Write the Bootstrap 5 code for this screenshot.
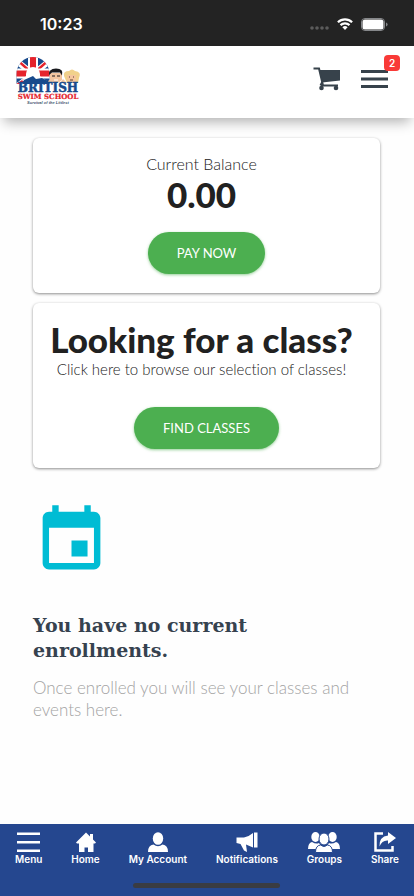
<!DOCTYPE html>
<html lang="en">
<head>
<meta charset="utf-8">
<meta name="viewport" content="width=device-width, initial-scale=1">
<title>British Swim School</title>
<link href="https://cdn.jsdelivr.net/npm/bootstrap@5.3.0/dist/css/bootstrap.min.css" rel="stylesheet">
<style>
  body { font-family: Lato, sans-serif; color: #212121; background: #fefefe; }
  svg { display: block; flex: none; }
  .status { background: #232323; height: 46px; padding: 2px 26px 0 40px; font: 600 16px/20px Inter, sans-serif; }
  .topbar { height: 72px; padding: 0 26px 6px 14px; box-shadow: 0 8px 12px -4px rgba(0,0,0,.3); }
  .brand { padding-top: 4px; }
  .icon-btn { background: none; border: 0; padding: 0; color: #37424b; }
  .cart { margin-right: 20px; }
  .count { position: absolute; top: -14px; right: -12px; width: 16px; height: 16px; border-radius: 4px; background: #f93a37; color: #fff; font: 600 10px/16px Inter, sans-serif; text-align: center; }
  .content { padding: 20px 34px 20px 33px; }
  .panel { border: 0; border-radius: 6px; padding: 16px 16px 19px; box-shadow: 0 1px 3px rgba(0,0,0,.45); }
  .panel + .panel { margin-top: 10px; }
  .panel-text { padding-right: 10px; margin-bottom: 18px; }
  .panel-note { font-size: 15px; line-height: 20px; font-weight: 300; margin: 0 0 10px; font-variant-ligatures: none; }
  .balance-label { font-size: 16px; margin: 0; }
  .panel-title { font-size: 35px; line-height: 40px; font-weight: 900; margin: 0; white-space: nowrap; }
  .action { background: #4caf50; color: #fff; border: 0; border-radius: 21px; height: 42px; padding: 0 29px; font-size: 13px; line-height: 20px; box-shadow: 0 1px 3px rgba(76,175,80,.6); }
  .action:hover { background: #43a047; color: #fff; }
  .empty-state { margin-top: 34px; }
  .empty-title { font: 700 19px/25px "Roboto Slab", "DejaVu Serif", serif; color: #36424f; margin: 34px 0 14px; }
  .empty-note { font-size: 17px; line-height: 22px; font-weight: 300; color: #a3a3a3; margin: 0; }
  .tabs { background: #25478f; height: 72px; padding: 7px 15px 0; position: relative; }
  .tabs a { color: #fff; text-decoration: none; font: 600 10px/12px Inter, sans-serif; }
  .home-bar { position: absolute; bottom: 8px; left: 50%; width: 147px; height: 5px; margin-left: -74px; border-radius: 3px; background: #3a3c42; }
</style>
</head>
<body class="d-flex flex-column min-vh-100">
<div class="status d-flex align-items-center justify-content-between text-white">
  <time>10:23</time>
  <div class="d-flex align-items-center gap-2">
    <svg width="20" height="14" viewBox="0 0 20 14" fill="#5c5c5c"><circle cx="3" cy="11" r="1.800"/><circle cx="8" cy="11" r="1.800"/><circle cx="13" cy="11" r="1.800"/><circle cx="18" cy="11" r="1.800"/></svg>
    <svg width="16" height="12" viewBox="0 0 16 12" fill="none" stroke="#fff" stroke-width="2.2"><path d="M.9 4.3a10.2 10.2 0 0 1 14.2 0M3.500 7.100a6.500 6.500 0 0 1 9 0"/><path fill="#fff" stroke="none" d="M5.400 9.200a3.900 3.900 0 0 1 5.200 0L8 12z"/></svg>
    <svg width="27" height="13" viewBox="0 0 27 13"><rect x=".5" y=".5" width="23" height="12" rx="3.500" fill="none" stroke="#85878a"/><rect x="1.500" y="1.500" width="21" height="10" rx="2.500" fill="#fff"/><path fill="#85878a" d="M25 4.500q1.600.5 1.600 2T25 8.500z"/></svg>
  </div>
</div>

<header class="topbar bg-white d-flex align-items-center justify-content-between">
  <a href="#" class="brand" aria-label="British Swim School">
    <svg width="68" height="50" viewBox="0 0 68 50">
      <defs><clipPath id="ring"><path d="M2.500 28V18A16.500 17 0 0 1 35.500 18V28z"/></clipPath></defs>
      <g clip-path="url(#ring)">
        <path fill="#184a8c" d="M0 0h38v28H0z"/>
        <path stroke="#fff" stroke-width="6" d="M19 18L0 3M19 18L38 3M19 18L0 33M19 18L38 33"/>
        <path stroke="#e5232c" stroke-width="2.400" d="M19 18L1 2M19 18L37 2M19 18L0 31M19 18L38 31"/>
        <path stroke="#fff" stroke-width="10" d="M19 0v28M0 17.500h38"/>
        <path stroke="#e5232c" stroke-width="6" d="M19 0v28M0 17.500h38"/>
      </g>
      <path fill="#fff" d="M12 20v-2a7 7 0 0 1 14 0v2l4 5H8z"/>
      <path fill="#184a8c" d="M10 24l9-4 3 3 6-1 8 4-3 2H8z"/>
      <path fill="#f3c5a0" d="M36 17h12v7q-6 6-12 0zM34 25l5-3 5 5h-9zM46 27l3-4 4 4z"/>
      <path fill="#18191d" d="M35 19q-1-6 7-6.500 8 0 6 7l-2-3h-8z"/>
      <path stroke="#18191d" fill="none" d="M38 20h3m2 0h3"/><path stroke="#fff" d="M40 24h4"/>
      <path fill="#f1d18b" d="M50 20q-1-5 5-5 3-3 6 0 7 1 4 7l-1 5H53z"/>
      <path fill="#f5c59d" d="M53 19h9v6q-4 3-8 0z"/><path stroke="#5a4130" d="M55 21h1m3 0h1M56 24h3"/>
      <text x="34" y="36" text-anchor="middle" font-family="DejaVu Serif, serif" font-weight="700" font-size="12" fill="#184a8c" stroke="#184a8c" stroke-width=".5">BRITISH</text>
      <text x="34" y="43" text-anchor="middle" font-family="DejaVu Serif, serif" font-weight="700" font-size="7" fill="#e5232c" stroke="#e5232c" stroke-width=".2">SWIM SCHOOL</text>
      <text x="34" y="48" text-anchor="middle" font-family="Liberation Sans, sans-serif" font-style="italic" font-weight="700" font-size="4" fill="#425571">Survival of the Littlest</text>
    </svg>
  </a>
  <div class="d-flex align-items-center">
    <button class="icon-btn cart" aria-label="Cart">
      <svg width="28" height="24" viewBox="0 0 28 24"><path fill="#37424b" d="M6.500 3H27v10.500L9 15.500z"/><path d="M.5 1.500h5.500l4 17M8 18.500h17M9 15.500l-1.500 3" fill="none" stroke="#37424b" stroke-width="2"/><circle cx="8.500" cy="21" r="2.300" fill="#37424b"/><circle cx="23" cy="21" r="2.300" fill="#37424b"/></svg>
    </button>
    <button class="icon-btn position-relative" aria-label="Open menu, 2 notices">
      <svg width="27" height="20" viewBox="0 0 27 20"><path fill="#37424b" d="M0 1h27v3H0zm0 7.500h27v3H0zM0 16h27v3H0z"/></svg>
      <span class="count">2</span>
    </button>
  </div>
</header>

<main class="content flex-grow-1">
  <section class="panel card text-center">
    <div class="panel-text">
      <p class="panel-note balance-label">Current Balance</p>
      <h2 class="panel-title">0.00</h2>
    </div>
    <div><button class="action btn">PAY NOW</button></div>
  </section>
  <section class="panel card text-center">
    <div class="panel-text">
      <h2 class="panel-title">Looking for a class?</h2>
      <p class="panel-note">Click here to browse our selection of classes!</p>
    </div>
    <div><button class="action btn">FIND CLASSES</button></div>
  </section>
  <section class="empty-state">
    <svg width="77" height="77" viewBox="0 0 24 24" fill="#00bcd4" aria-hidden="true"><path d="M17 12h-5v5h5v-5zM16 1v2H8V1H6v2H5c-1.110 0-1.990.9-1.990 2L3 19c0 1.100.89 2 2 2h14c1.100 0 2-.9 2-2V5c0-1.100-.9-2-2-2h-1V1h-2zm3 18H5V8h14v11z"/></svg>
    <h1 class="empty-title">You have no current enrollments.</h1>
    <p class="empty-note">Once enrolled you will see your classes and events here.</p>
  </section>
</main>

<nav class="tabs d-flex justify-content-between align-items-start" aria-label="Main">
  <a href="#" class="d-flex flex-column align-items-center">
    <svg width="24" height="22" viewBox="0 0 24 22"><path fill="#fff" d="M0 1.500h23v2.500H0zm0 8.500h23v2.500H0zM0 18.500h23V21H0z"/></svg>Menu</a>
  <a href="#" class="d-flex flex-column align-items-center">
    <svg width="20" height="22" viewBox="0 0 20 22"><path fill="#fff" d="M10 1.500l4 4V3h3v5.500l3 3-1 1h-1.500V21H12v-4.500H8.500V21H3v-8.500H1l-1-1z"/></svg>Home</a>
  <a href="#" class="d-flex flex-column align-items-center">
    <svg width="20" height="22" viewBox="0 0 20 22" fill="#fff"><ellipse cx="10" cy="7.500" rx="5.200" ry="6.300"/><path d="M0 21q0-7 5.500-7.500Q10 17 14.500 13.500 20 14 20 21z"/></svg>My Account</a>
  <a href="#" class="d-flex flex-column align-items-center">
    <svg width="22" height="22" viewBox="0 0 22 22"><path fill="#fff" d="M18 1.500h3.500v15H18zM17 2v14.500l-7-3 1 7.500-3-1.500-3.500-6.500L.5 12V6.500H8q5-1 9-4.500z"/></svg>Notifications</a>
  <a href="#" class="d-flex flex-column align-items-center">
    <svg width="32" height="22" viewBox="0 0 32 22" fill="#fff"><ellipse cx="7.500" cy="6" rx="4.200" ry="5"/><ellipse cx="24.500" cy="6" rx="4.200" ry="5"/><path d="M0 18q0-6 4-7 4 2.500 7 1l2 3-4 3zM32 18q0-6-4-7-4 2.500-7 1l-2 3 4 3z"/><g stroke="#25478f"><ellipse cx="16" cy="8" rx="5" ry="6"/><path d="M7.500 21.500q0-7 5-7.500 3.500 3 7 0 5 .5 5 7.500z"/></g></svg>Groups</a>
  <a href="#" class="d-flex flex-column align-items-center">
    <svg width="22" height="22" viewBox="0 0 22 22"><path fill="none" stroke="#fff" stroke-width="2.500" d="M9 2.500H1.500v17h17V15"/><path fill="#fff" d="M14 1l8 6-8 6V9.500q-6-.5-8.500 6Q5 5.500 14 4.500z"/></svg>Share</a>
  <span class="home-bar"></span>
</nav>
<script src="https://cdn.jsdelivr.net/npm/bootstrap@5.3.0/dist/js/bootstrap.bundle.min.js"></script>
</body>
</html>
